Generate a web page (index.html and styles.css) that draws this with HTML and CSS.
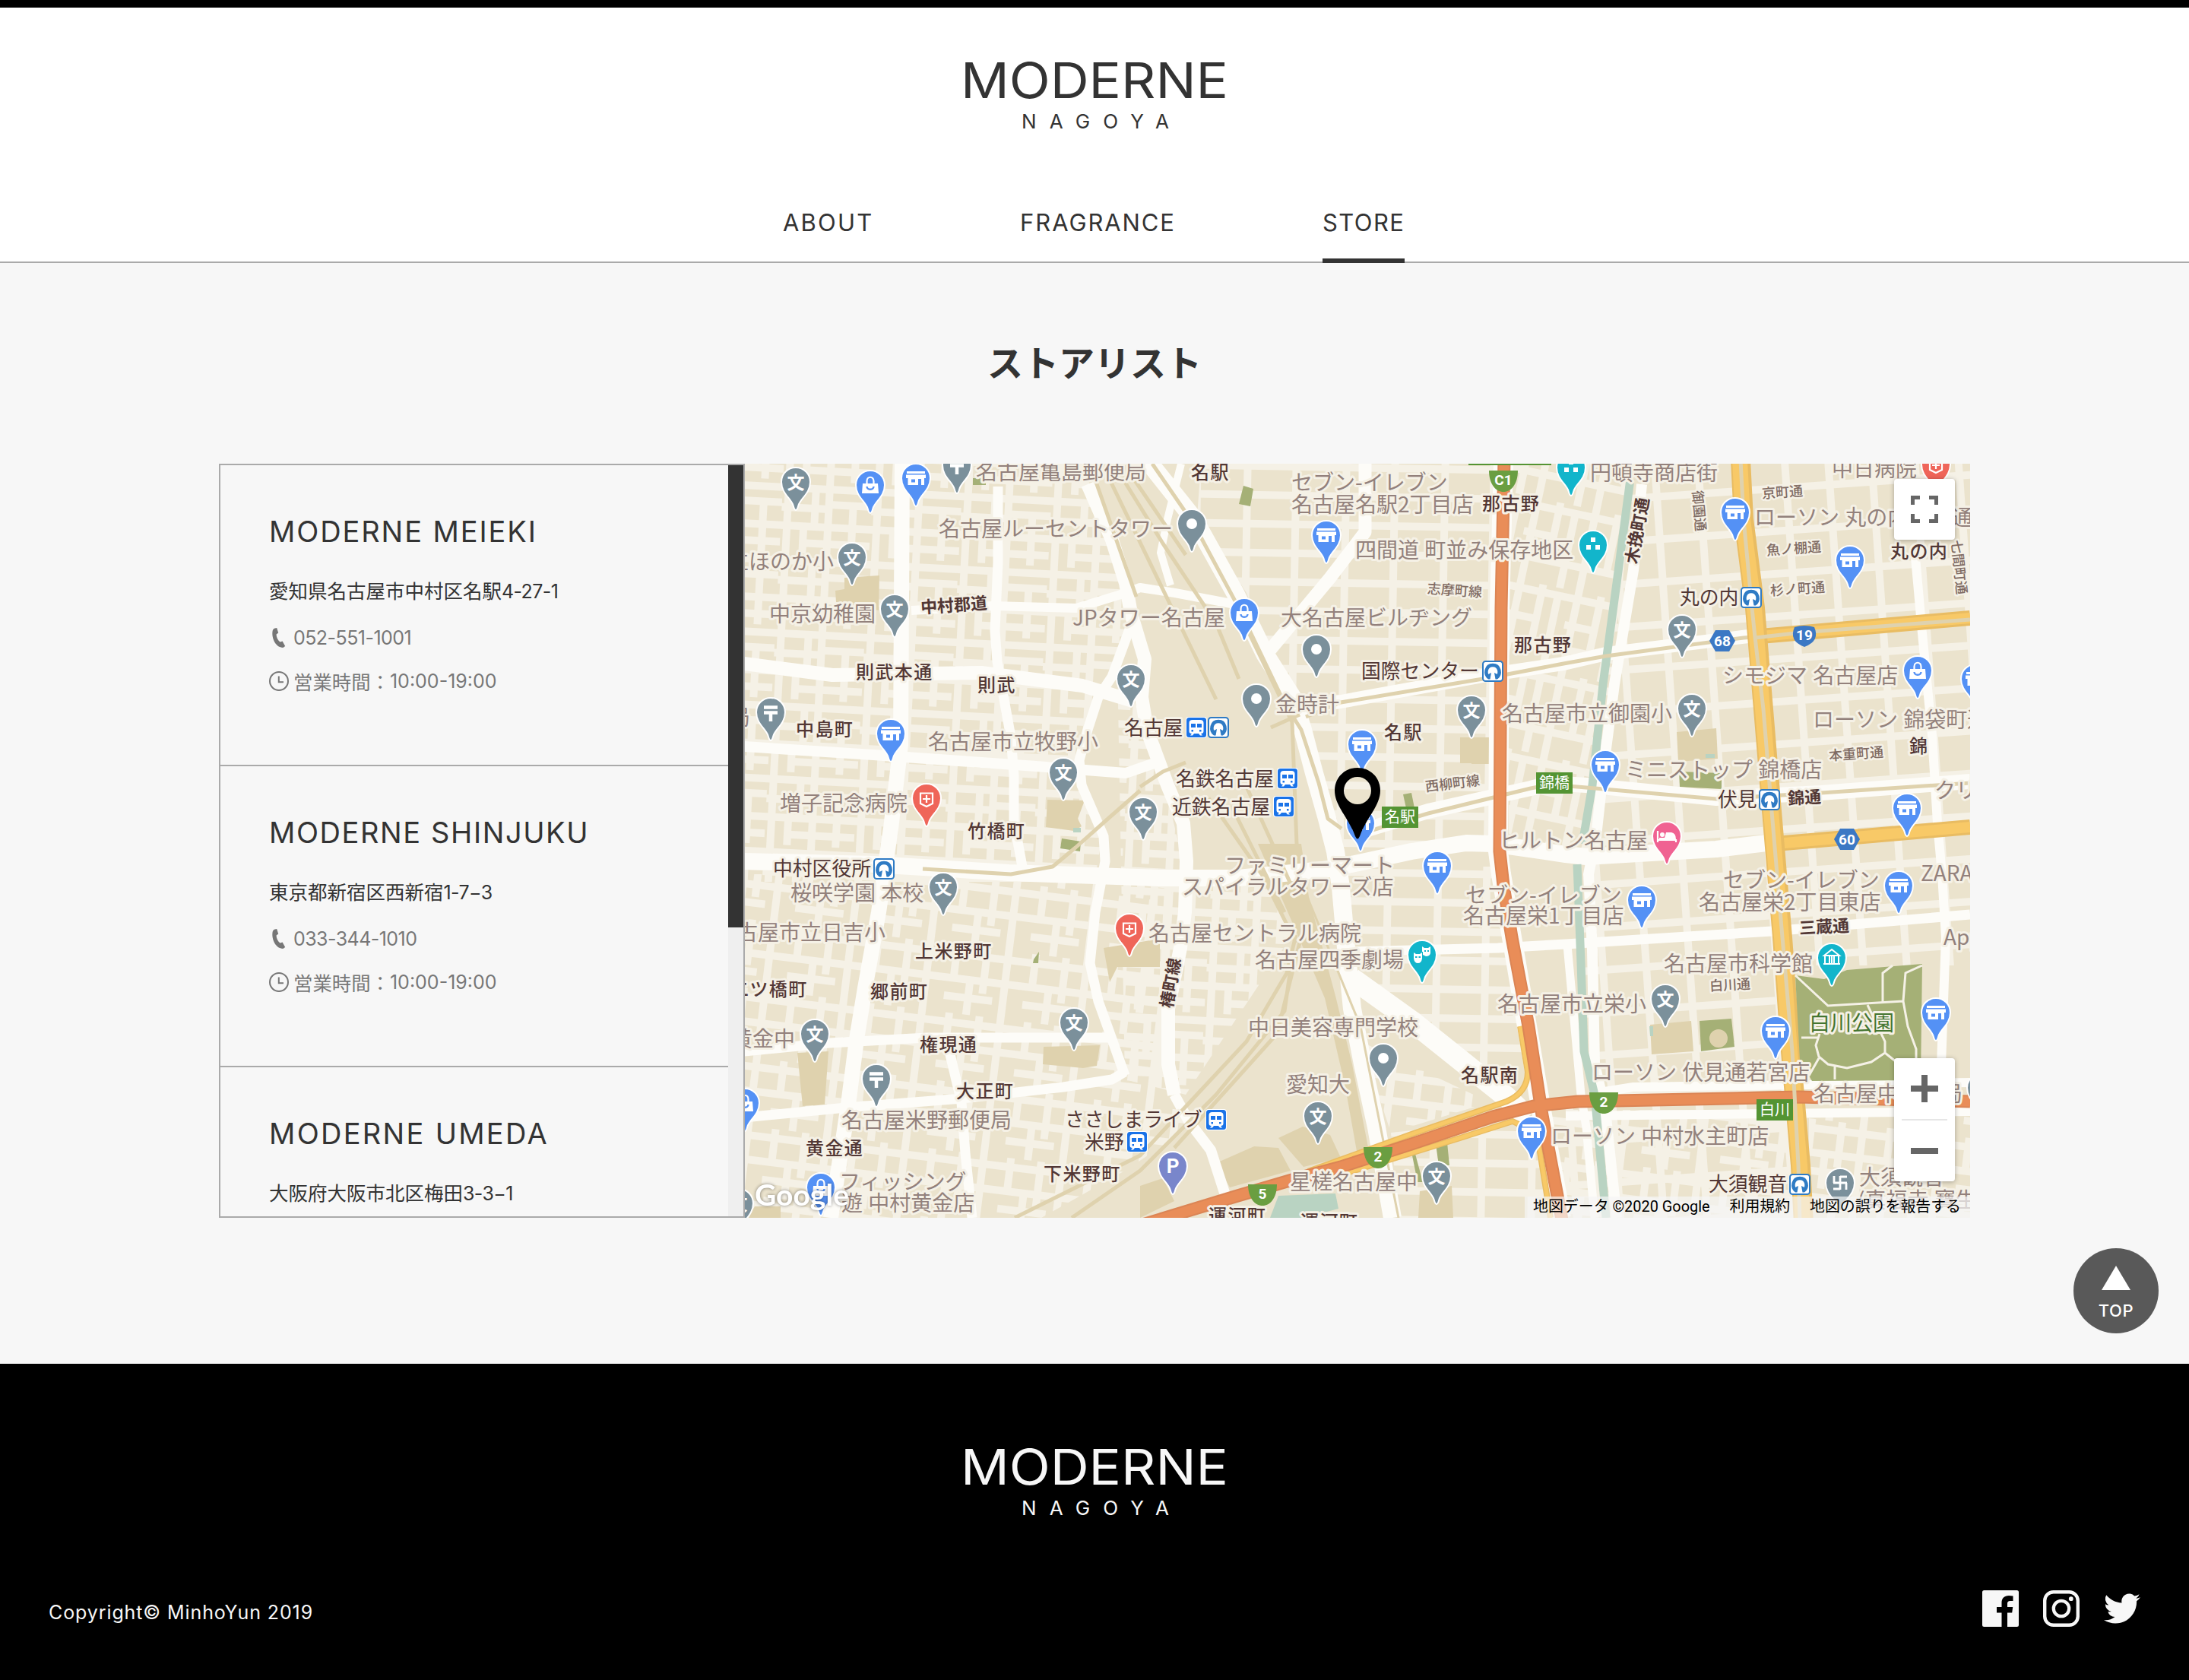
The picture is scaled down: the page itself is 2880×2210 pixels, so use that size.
FILE: index.html
```html
<!DOCTYPE html>
<html lang="ja">
<head>
<meta charset="utf-8">
<title>MODERNE NAGOYA</title>
<link rel="stylesheet" href="styles.css">
</head>
<body>
<header class="header">
  <svg class="logo" viewBox="0 0 352 92" role="img" aria-label="MODERNE NAGOYA">
    <text class="logo-name" x="0" y="49" textLength="352" lengthAdjust="spacingAndGlyphs">MODERNE</text>
    <text class="logo-city" x="80" y="89" textLength="194">NAGOYA</text>
  </svg>
  <nav class="nav">
    <a class="nav-link nav-about">ABOUT</a>
    <a class="nav-link nav-fragrance">FRAGRANCE</a>
    <a class="nav-link nav-store is-active">STORE</a>
  </nav>
</header>

<main class="main">
  <h1 class="title">ストアリスト</h1>
  <section class="stores">
    <div class="panel">
      <ul class="list">
        <li class="item">
          <h2 class="name name-meieki">MODERNE MEIEKI</h2>
          <p class="address">愛知県名古屋市中村区名駅<span class="num">4-27-1</span></p>
          <p class="info tel"><svg class="icon" viewBox="0 0 26 26"><use href="#i-tel"/></svg><span class="num">052-551-1001</span></p>
          <p class="info hours"><svg class="icon" viewBox="0 0 26 26"><use href="#i-clock"/></svg><span>営業時間：</span><span class="num">10:00-19:00</span></p>
        </li>
        <li class="item">
          <h2 class="name name-shinjuku">MODERNE SHINJUKU</h2>
          <p class="address">東京都新宿区西新宿<span class="num">1-7−3</span></p>
          <p class="info tel"><svg class="icon" viewBox="0 0 26 26"><use href="#i-tel"/></svg><span class="num">033-344-1010</span></p>
          <p class="info hours"><svg class="icon" viewBox="0 0 26 26"><use href="#i-clock"/></svg><span>営業時間：</span><span class="num">10:00-19:00</span></p>
        </li>
        <li class="item">
          <h2 class="name name-umeda">MODERNE UMEDA</h2>
          <p class="address">大阪府大阪市北区梅田<span class="num">3-3−1</span></p>
        </li>
      </ul>
      <div class="scrollbar"><div class="thumb"></div></div>
    </div>

    <div class="map">
      <svg class="canvas" viewBox="980 610 1612 992">
        <defs>
          <symbol id="i-tel" viewBox="0 0 26 26"><path fill="#777" d="M7.5 0.4 10.2 0 12.2 6.5 9.6 8.4C9.6 12 11.5 16 14.4 18.6L17.6 17.6 21.2 24 18.4 25.9C9 26 3 14 4.6 4 5 2 6 1 7.500.4z"/></symbol>
          <symbol id="i-clock" viewBox="0 0 26 26"><g fill="none" stroke="#777" stroke-width="2"><circle cx="13" cy="13" r="12"/><path d="M12.800 6.500V14.200H19"/></g></symbol>

          <pattern id="g1" width="118" height="96" patternUnits="userSpaceOnUse" patternTransform="rotate(3)">
            <path class="lane" d="M0 10H118M0 36H62M62 30H118M0 60H118M30 82H118M8 0V96M44 10V60M62 0V96M94 30V96M30 60V96"/>
          </pattern>
          <pattern id="g2" width="104" height="90" patternUnits="userSpaceOnUse" patternTransform="rotate(7)">
            <path class="lane" d="M0 12H104M0 44H104M40 68H104M14 0V90M50 0V44M72 44V90M90 0V60"/>
          </pattern>
          <pattern id="g3" width="57" height="56" patternUnits="userSpaceOnUse" patternTransform="rotate(-4)">
            <path class="lane" d="M0 20H57M20 0V56"/>
          </pattern>
          <pattern id="g4" width="78" height="110" patternUnits="userSpaceOnUse" patternTransform="rotate(12)">
            <path class="lane" d="M0 10H78M0 46H40M0 78H78M10 0V110M40 0V78M62 10V110"/>
          </pattern>
          <pattern id="g5" width="130" height="76" patternUnits="userSpaceOnUse" patternTransform="rotate(1)">
            <path class="lane" d="M0 14H130M0 52H130M26 0V76M92 0V76"/>
          </pattern>

          <path id="pin" d="M0 37C-2 37-2.500 34-3.400 31-6 22-19 15-19 0A19 19 0 1 1 19 0C19 15 6 22 3.400 31 2.500 34 2 37 0 37z" stroke="#fff" stroke-width="2"/>
          <g id="school"><use href="#pin" fill="#7b909b"/><text class="glyph" y="9">文</text></g>
          <g id="post"><use href="#pin" fill="#7b909b"/><path fill="none" stroke="#fff" stroke-width="4.500" d="M-9-6.500H9M-9 .5H9M0 0V12"/></g>
          <g id="dot"><use href="#pin" fill="#7b909b"/><circle r="7" fill="#fff"/></g>
          <g id="shop"><use href="#pin" fill="#5491f5"/><path fill="#fff" fill-rule="evenodd" d="M-12-9H12V-6H-12zM-13-4.500H13V0H11V9H7V1H3V9H-10.500V0H-13zM-6 1.500V5.500H-1V1.500z"/></g>
          <g id="bag"><use href="#pin" fill="#5491f5"/><path fill="#fff" d="M-10-2H10L11 11H-11z"/><path fill="none" stroke="#fff" stroke-width="2.200" d="M-4.500-1V-5C-4.500-12 4.500-12 4.500-5V-1"/><path fill="none" stroke="#5491f5" stroke-width="2.400" d="M-4.500 2C-4 7 4 7 4.500 2"/></g>
          <g id="hospital"><use href="#pin" fill="#ef6559"/><path fill="none" stroke="#fff" stroke-width="2.200" d="M-8-6.500H8V7L0 11-8 7zM0-4V6M-5 1H5"/></g>
          <g id="sight"><use href="#pin" fill="#12b5cb"/><path fill="#fff" d="M-3-10H3V-4H-3zM-9 0H-3V6H-9zM3 0H9V6H3z"/></g>
          <g id="train"><rect x="-14" y="-14" width="28" height="28" rx="4" fill="#fff"/><rect x="-13" y="-13" width="26" height="26" rx="3.500" fill="#1a73e8"/><path fill="#fff" fill-rule="evenodd" d="M-5-10H5Q9.500-10 9.500-6V5Q9.500 8 6 8L8 10.500H5L3 8H-3L-5 10.500H-8L-6 8Q-9.500 8-9.500 5V-6Q-9.500-10-5-10zM-7-5V0H-1V-5zM1-5V0H7V-5zM-6.500 3V5.500H-4V3zM4 3V5.500H6.500V3z"/></g>
          <g id="metro"><rect x="-13" y="-13" width="26" height="26" rx="3.500" fill="#fff" stroke="#2f7bc4" stroke-width="2"/><path fill="none" stroke="#2f7bc4" stroke-width="4.500" d="M-5 8.500C-11 4-9.500-8 0-8S11 4 5 8.500"/><path fill="#2f7bc4" d="M-8 5-2 2-3.500 10.500H-6zM8 5 2 2 3.500 10.500H6z"/></g>
          <path id="badge" d="M-19-14H19C19 4 10 14 0 14S-19 4-19-14z" fill="#6a9e41"/>
          <path id="hex" d="M-17 0-9-14H9L17 0 9 14H-9z" fill="#3b78c4"/>
        </defs>

        <rect x="979" y="610" width="1614" height="992" fill="#ebe3cd"/>

        <g>
          <path fill="url(#g1)" d="M979 610H1425L1480 780 1490 830 1430 960 1420 1000 1450 1100 1440 1160H979z"/>
          <path fill="url(#g2)" d="M979 1150H1545L1530 1420 1570 1480 1480 1540 1370 1602H979z"/>
          <path fill="url(#g5)" d="M1580 610H1975V1110L1760 1120 1700 930 1640 780 1575 680z"/>
          <path fill="url(#g4)" d="M1985 610H2150L2100 1120H1985z"/>
          <path fill="url(#g3)" d="M2150 610H2592V1270H2360V1602H2040V1460L2080 1450 2085 1100z"/>
          <path fill="url(#g2)" d="M2380 1465H2592V1602H2380zM2040 1460H2360V1602H2050z"/>
          <path fill="url(#g5)" d="M1765 1140H1985L2010 1400 1970 1430 1780 1280zM1830 1490 2020 1470 2050 1602H1840z"/>
          <path fill="url(#g1)" d="M1470 870 1525 1000 1560 1150 1660 1150 1700 1230 1560 1440 1480 1420z"/>
          <path fill="url(#g2)" d="M1790 1370 1960 1450 1830 1490z"/>
        </g>

        <g fill="#dfd2ae">
          <path d="M1099 777 1111 775V760L1157 757 1156 803 1100 792z"/>
          <path d="M1378 1052 1427 1053 1418 1077 1423 1087 1413 1093 1376 1088z"/>
          <path d="M1921 970H1960V1005H1936V1004H1921z"/>
          <path d="M2206 963 2258 958 2260 998 2208 1002z"/>
          <path d="M2171 1348 2225 1343 2228 1383 2173 1387z"/>
          <path d="M1452 1247 1526 1235V1272H1470L1460 1292z"/>
          <path d="M1049 1385 1090 1383 1085 1453 1056 1455z"/>
          <path d="M1373 1377 1447 1375 1443 1402 1425 1405 1372 1400z"/>
          <path d="M993 1587H1027V1602H985z"/>
          <path d="M1682 1497 1714 1482 1750 1493 1764 1523 1715 1535z"/>
          <path d="M1600 1530 1650 1508 1682 1510 1698 1540 1618 1562z"/>
          <path d="M1868 1567 1910 1560 1912 1602H1866z"/>
          <path d="M1500 1560 1530 1550 1545 1580 1500 1602z"/>
          <path d="M1655 1110H1712L1722 1180 1757 1310 1779 1400 1803 1525 1786 1520 1770 1430 1743 1313 1700 1213z"/>
        </g>
        <g fill="#a5b076">
          <path d="M1397 1103 1422 1107 1421 1120 1395 1116z"/>
          <path d="M1636 639 1649 643 1645 666 1630 663z"/>
          <path d="M1846 1045 1857 1043 1861 1063H1850z"/>
          <path d="M2209 1015 2265 1017V1038L2210 1035z"/>
          <path d="M2236 1343 2278 1340 2282 1377 2238 1383z"/>
          <path d="M1889 1505 1904 1503 1907 1533H1893zM1858 1520 1862 1518 1872 1555H1865z"/>
          <path d="M1280 629H1297V638H1280zM1360 1262 1367 1252 1366 1267H1359z"/>
        </g>
        <circle cx="2261" cy="1366" r="12" fill="#dfd2ae"/>
        <g fill="#b9d3c2">
          <path d="M1682 1573 1757 1570 1761 1590 1715 1602H1671z"/>
          <path d="M2170 1350 2175 1350 2175 1363H2171zM2244 992H2256V997H2244zM1412 1089H1422V1095H1412z"/>
        </g>

        <g class="main-road">
          <path stroke-width="20" d="M1187 610 1186 790 1185 980 1172 1090 1156 1200 1138 1300 1127 1367 1116 1453 1109 1500 1093 1602"/>
          <path stroke-width="13" d="M1313 640V740L1309 830 1312 870 1330 970 1334 1020V1080L1345 1140"/>
          <path stroke-width="18" d="M979 873 1095 888 1291 885 1424 902 1490 922"/>
          <path stroke-width="14" d="M979 982 1149 993 1363 1008 1481 1017 1530 1000"/>
          <path stroke-width="12" d="M1199 803 1306 797 1416 800 1481 780 1500 773 1546 780 1625 795"/>
          <path stroke-width="18" d="M1431 637 1463 710 1481 767 1488 807 1506 867 1502 917 1509 960 1536 1033 1557 1083 1561 1133 1559 1200 1553 1247 1537 1327V1400L1545 1440"/>
          <path stroke-width="14" d="M1545 1440 1564 1475 1593 1513 1613 1575"/>
          <path stroke-width="13" d="M1490 817 1463 890 1445 917 1431 960 1420 1000 1423 1033 1452 1100 1454 1133 1441 1200 1434 1267 1445 1317 1463 1367 1480 1415"/>
          <path stroke-width="13" d="M979 1383 1091 1372 1220 1365H1462M979 1470 1113 1457 1266 1445 1399 1430 1463 1420 1480 1410M1249 1383 1265 1450 1270 1517 1279 1602"/>
          <path stroke-width="22" d="M979 1133 1149 1137 1327 1148 1527 1155 1629 1155 1750 1143 1857 1120 1929 1109 1964 1110 2060 1124 2087 1127 2258 1117 2324 1109"/>
          <path stroke-width="24" d="M1505 600 1571 683 1625 780 1664 860 1700 917 1714 960 1729 1017 1746 1077 1757 1120 1764 1167 1771 1247 1779 1327 1793 1400 1811 1483 1832 1602"/>
          <path stroke-width="10" d="M1554 610 1536 683 1527 727 1540 770"/>
          <path stroke-width="17" d="M1796 610V700L1750 760 1671 855"/>
          <path stroke-width="18" d="M1707 933 1764 923 1957 888 2057 873 2113 860 2300 837"/>
          <path stroke-width="20" d="M1779 1097 1879 1067 2014 1037 2040 1030 2087 1033 2258 1050 2396 1043 2592 1028"/>
          <path stroke-width="28" d="M1779 1287 1857 1343 1982 1443 2010 1470"/>
          <path stroke-width="13" d="M1779 1252 1971 1247 2060 1242 2331 1225 2592 1203"/>
          <path stroke-width="14" d="M2160 637 2149 750 2124 900 2111 1000 2100 1100 2090 1150 2095 1250 2098 1400 2112 1460 2127 1602"/>
          <path stroke-width="11" d="M2062 1243 2080 1440 2087 1483 2098 1602"/>
          <path stroke-width="12" d="M2520 733 2529 833 2542 967 2549 1083 2555 1150 2560 1233 2553 1430"/>
          <path stroke-width="12" d="M2098 1438 2149 1430 2592 1424M2060 1468 2592 1462"/>
          <path stroke-width="26" d="M1978 610 1973 800 1971 1120 1975 1150 1989 1233 2009 1350 2029 1467 2054 1602"/>
        </g>

        <path class="water" d="M2145 630 2127 767 2109 900 2095 1033 2082 1110M2075 1137 2080 1267 2084 1383 2098 1440 2113 1602"/>

        <g class="rail">
          <path d="M1516 610 1571 690 1630 800 1690 925 1712 960 1735 1030 1747 1077 1765 1090"/>
          <path d="M1430 600 1495 785M1445 600 1600 920M1465 610 1530 715 1600 820 1630 893M1478 610 1560 730M1672 957 1710 940"/>
          <path d="M1625 795 1700 950 1706 1110M1590 1050 1660 1150 1705 1240M1620 1060 1690 1200M1640 1035 1715 1200"/>
          <path d="M1560 1003 1530 1015 1500 1035M1500 1040 1460 1075 1415 1115 1385 1140 1330 1150 1214 1143"/>
          <path d="M1705 1230 1693 1280 1640 1370 1500 1520 1335 1602M1710 1240 1680 1360 1545 1510M1700 1260 1690 1330 1600 1440 1500 1540 1410 1602"/>
          <path d="M1720 1180 1790 1350 1840 1602" stroke-width="3"/>
          <path d="M1718 943 1764 924 1957 892 2057 873 2113 863 2294 839 2592 815"/>
          <path d="M1779 1100 1879 1070 2014 1037 2040 1032 2087 1036 2258 1051 2396 1043 2592 1030"/>
        </g>

        <g class="road-line">
          <path stroke="#e9bc62" stroke-width="20" d="M2316 837 2592 813M2336 1110 2592 1088"/>
          <path stroke="#f8c967" stroke-width="14" d="M2316 837 2592 813M2336 1110 2592 1088"/>
          <path stroke="#e9bc62" stroke-width="26" d="M2290 605 2294 683 2309 800 2320 933 2331 1067 2345 1233 2356 1383 2369 1533 2373 1610"/>
          <path stroke="#f8c967" stroke-width="20" d="M2289 605 2293 683 2308 800 2319 933 2330 1067 2344 1233 2355 1383 2368 1533 2372 1610"/>
          <path stroke="#e9bc62" stroke-width="8" d="M1721 1541 1857 1492 1982 1449Q2010 1437 2010 1410L2000 1350M1765 1545 1921 1497 1990 1475 2022 1490 2040 1602"/>
          <path stroke="#f8c967" stroke-width="5" d="M1721 1541 1857 1492 1982 1449Q2010 1437 2010 1410L2000 1350M1765 1545 1921 1497 1990 1475 2022 1490 2040 1602"/>
          <path stroke="#db8555" stroke-width="17" d="M1979 605 1975 800 1973 1120 1978 1165 1989 1233 2011 1350 2029 1467 2056 1610M1500 1612 1625 1574 1700 1552 1764 1535 1857 1505 1964 1469 2018 1455 2076 1449 2367 1443 2592 1449"/>
          <path stroke="#e98d58" stroke-width="13" d="M1979 605 1975 800 1973 1120 1978 1165 1989 1233 2011 1350 2029 1467 2056 1610M1500 1612 1625 1574 1700 1552 1764 1535 1857 1505 1964 1469 2018 1455 2076 1449 2367 1443 2592 1449"/>
          <path stroke="#dfd2ae" stroke-width="5" d="M2290 605 2294 683 2305 800 2309 838 2320 933 2331 1067 2345 1233 2358 1383 2366 1533 2368 1610M2309 839 2370 832 2592 815"/>
        </g>

        <path fill="#a5b076" d="M2362 1283 2400 1288 2430 1276 2529 1268 2527 1421 2384 1422 2368 1395z"/>
        <path fill="none" stroke="#f5f1e6" stroke-width="3" d="M2362 1283 2405 1323 2504 1317M2477 1320V1280L2490 1270M2504 1317 2507 1280 2529 1270M2504 1317 2510 1350 2521 1380V1420M2457 1322 2480 1370 2480 1385 2462 1397 2430 1405 2405 1400 2393 1390 2389 1375 2394 1360M2370 1365H2392M2393 1392 2380 1415M2480 1385 2505 1405M2414 1402V1420"/>

        <rect x="1932" y="610" width="109" height="2" fill="#549433"/>

        <g class="plate">
          <rect x="1818" y="1061" width="48" height="28"/><rect x="2021" y="1016" width="48" height="28"/><rect x="2311" y="1446" width="48" height="28"/>
          <text x="1842" y="1082">名駅</text><text x="2045" y="1037">錦橋</text><text x="2335" y="1467">白川</text>
        </g>
        <g class="shield">
          <use href="#badge" x="1978" y="633"/><text x="1978" y="638">C1</text>
          <use href="#badge" x="1813" y="1523"/><text x="1813" y="1528">2</text>
          <use href="#badge" x="1661" y="1572"/><text x="1661" y="1577">5</text>
          <use href="#badge" x="2110" y="1451"/><text x="2110" y="1456">2</text>
          <path d="M2361 825Q2374 821 2387 825 2395 843 2374 851 2353 843 2361 825z" fill="#3b78c4"/><text x="2374" y="842">19</text>
          <use href="#hex" x="2266" y="843"/><text x="2266" y="850">68</text>
          <use href="#hex" x="2430" y="1104"/><text x="2430" y="1111">60</text>
        </g>

        <g class="poi" transform="translate(0 9)">
          <text x="1284" y="622">名古屋亀島郵便局</text><text x="1235" y="697">名古屋ルーセントタワー</text><text x="957" y="740">立ほのか小</text>
          <text x="1012" y="809">中京幼稚園</text><text x="1411" y="814">JPタワー名古屋</text><text x="1221" y="977">名古屋市立牧野小</text>
          <text x="1026" y="1058">増子記念病院</text><text x="959" y="945">局</text><text x="1699" y="636">セブン-イレブン</text>
          <text x="1699" y="665">名古屋名駅2丁目店</text><text x="1783" y="725">四間道 町並み保存地区</text><text x="1685" y="814">大名古屋ビルヂング</text>
          <text x="1678" y="928">金時計</text><text x="1976" y="940">名古屋市立御園小</text><text x="1972" y="1107">ヒルトン名古屋</text>
          <text x="2092" y="623">円頓寺商店街</text><text x="2410" y="618">中日病院</text><text x="2308" y="682">ローソン 丸の内本町通</text>
          <text x="2266" y="890">シモジマ 名古屋店</text><text x="2385" y="948">ローソン 錦袋町通</text><text x="2138" y="1014">ミニストップ 錦橋店</text>
          <text x="2545" y="1041">クリ</text><text x="1040" y="1176">桜咲学園 本校</text><text x="941" y="1228">名古屋市立日吉小</text>
          <text x="962" y="1368">黄金中</text><text x="1107" y="1475">名古屋米野郵便局</text><text x="1104" y="1556">フィッシング</text>
          <text x="1107" y="1584">遊 中村黄金店</text><text x="1611" y="1140">ファミリーマート</text><text x="1555" y="1168">スパイラルタワーズ店</text>
          <text x="1511" y="1229">名古屋セントラル病院</text><text x="1651" y="1264">名古屋四季劇場</text><text x="1642" y="1353">中日美容専門学校</text>
          <text x="1692" y="1428">愛知大</text><text x="1928" y="1179">セブン-イレブン</text><text x="1925" y="1206">名古屋栄1丁目店</text>
          <text x="1970" y="1322">名古屋市立栄小</text><text x="1697" y="1556">星槎名古屋中</text><text x="2267" y="1159">セブン-イレブン</text>
          <text x="2235" y="1188">名古屋栄2丁目東店</text><text x="2527" y="1150">ZARA</text><text x="2189" y="1269">名古屋市科学館</text>
          <text x="2557" y="1234">Apple</text><text x="2094" y="1412">ローソン 伏見通若宮店</text><text x="2386" y="1440">名古屋中郵便局</text>
          <text x="2040" y="1496">ローソン 中村水主町店</text><text x="2446" y="1550">大須観音</text><text x="2444" y="1580">(真福寺 寶生院)</text>
          <text class="park" x="2380" y="1347">白川公園</text>
        </g>

        <g class="area" transform="translate(0 9)">
          <text x="1126" y="884">則武本通</text><text x="1286" y="901">則武</text><text x="1047" y="959">中島町</text><text x="1273" y="1093">竹橋町</text>
          <text x="1567" y="621">名駅</text><text x="1950" y="662">那古野</text><text x="1992" y="848">那古野</text><text x="1821" y="963">名駅</text>
          <text x="2487" y="725">丸の内</text><text x="2512" y="981">錦</text><text x="1204" y="1251">上米野町</text><text x="961" y="1301">二ツ橋町</text>
          <text x="1145" y="1304">郷前町</text><text x="1210" y="1374">権現通</text><text x="1258" y="1435">大正町</text><text x="1060" y="1510">黄金通</text>
          <text x="1373" y="1544">下米野町</text><text x="1922" y="1414">名駅南</text><text x="1590" y="1599">運河町</text><text x="1711" y="1607">運河町</text>
        </g>

        <g class="station" transform="translate(0 9.500)">
          <text x="1479" y="957">名古屋</text><text x="1547" y="1024">名鉄名古屋</text><text x="1542" y="1061">近鉄名古屋</text><text x="1791" y="882">国際センター</text>
          <text x="2210" y="785">丸の内</text><text x="2260" y="1051">伏見</text><text x="1017" y="1142">中村区役所</text><text x="1401" y="1472">ささしまライブ</text>
          <text x="1427" y="1502">米野</text><text x="2248" y="1557">大須観音</text>
        </g>

        <g class="street" text-anchor="middle">
          <text transform="translate(1255 796) rotate(-4)" y="8">中村郡道</text><text transform="translate(2154 698) rotate(-80)" y="8">木挽町通</text>
          <text transform="translate(2374 1049) rotate(-3)" y="8">錦通</text><text transform="translate(2400 1219) rotate(-3)" y="8">三蔵通</text>
          <text transform="translate(1540 1293) rotate(-80)" y="8">椿町線</text>
        </g>
        <g class="lane-name" text-anchor="middle">
          <text transform="translate(1914 776) rotate(4)" y="7">志摩町線</text><text transform="translate(1911 1030) rotate(-7)" y="7">西柳町線</text>
          <text transform="translate(2345 647) rotate(-4)" y="7">京町通</text><text transform="translate(2236 672) rotate(85)" y="7">御園通</text>
          <text transform="translate(2360 721) rotate(-4)" y="7">魚ノ棚通</text><text transform="translate(2365 774) rotate(-4)" y="7">杉ノ町通</text>
          <text transform="translate(2578 746) rotate(84)" y="7">七間町通</text><text transform="translate(2442 991) rotate(-4)" y="7">本重町通</text>
          <text transform="translate(2276 1295) rotate(-3)" y="7">白川通</text>
        </g>

        <g>
          <use href="#train" x="1574" y="957"/><use href="#metro" x="1603" y="957"/><use href="#train" x="1694" y="1024"/><use href="#train" x="1689" y="1061"/>
          <use href="#metro" x="1964" y="883"/><use href="#metro" x="2304" y="786"/><use href="#metro" x="2328" y="1052"/><use href="#metro" x="1163" y="1143"/>
          <use href="#train" x="1600" y="1473"/><use href="#train" x="1496" y="1502"/><use href="#metro" x="2368" y="1558"/>
        </g>

        <g>
          <use href="#school" x="1047" y="634"/><use href="#school" x="1121" y="733"/><use href="#school" x="1177" y="801"/><use href="#school" x="1488" y="893"/>
          <use href="#school" x="1399" y="1016"/><use href="#school" x="1504" y="1068"/><use href="#school" x="1936" y="934"/><use href="#school" x="2213" y="828"/>
          <use href="#school" x="2226" y="932"/><use href="#school" x="1241" y="1167"/><use href="#school" x="1072" y="1360"/><use href="#school" x="1413" y="1345"/>
          <use href="#school" x="1734" y="1468"/><use href="#school" x="1890" y="1547"/><use href="#school" x="2191" y="1314"/><use href="#school" x="972" y="1583"/>
          <use href="#post" x="1259" y="612"/><use href="#post" x="1014" y="937"/><use href="#post" x="1153" y="1419"/>
          <use href="#dot" x="1568" y="689"/><use href="#dot" x="1732" y="854"/><use href="#dot" x="1653" y="919"/><use href="#dot" x="1820" y="1392"/><use href="#dot" x="2607" y="1431"/>
          <use href="#shop" x="1205" y="629"/><use href="#shop" x="1172" y="965"/><use href="#shop" x="1745" y="704"/><use href="#shop" x="1790" y="1083"/>
          <use href="#shop" x="1792" y="979"/><use href="#shop" x="2283" y="674"/><use href="#shop" x="2434" y="737"/><use href="#shop" x="2599" y="893"/>
          <use href="#shop" x="2112" y="1006"/><use href="#shop" x="2509" y="1063"/><use href="#shop" x="1891" y="1139"/><use href="#shop" x="2015" y="1488"/>
          <use href="#shop" x="2160" y="1184"/><use href="#shop" x="2498" y="1165"/><use href="#shop" x="2547" y="1332"/><use href="#shop" x="2336" y="1356"/>
          <use href="#bag" x="1145" y="638"/><use href="#bag" x="1637" y="806"/><use href="#bag" x="2523" y="882"/><use href="#bag" x="980" y="1451"/><use href="#bag" x="1080" y="1562"/>
          <use href="#hospital" x="1219" y="1050"/><use href="#hospital" x="1486" y="1221"/><use href="#hospital" x="2547" y="611"/>
          <use href="#sight" x="2067" y="615"/><use href="#sight" x="2096" y="717"/>
          <g transform="translate(1871 1256)"><use href="#pin" fill="#12b5cb"/><path fill="#fff" d="M0-11 3-9H8L11-11V-2Q10 2 5 2L1 0V-4H0zM-11-3-8-1H-3L0-3V5Q-1 11-5.500 11T-11 5z"/><path stroke="#12b5cb" stroke-width="2" d="M-9 3H-6.500M-4.500 3H-2M3-5H5M7-5H9"/></g>
          <g transform="translate(2410 1260)"><use href="#pin" fill="#12b5cb"/><path fill="none" stroke="#fff" stroke-width="2" d="M-10-3 0-11 10-3zM-11 8H11M-9-3V8M9-3V8M-3-2V7M0-2V7M3-2V7"/></g>
          <g transform="translate(2193 1100)"><use href="#pin" fill="#f06292"/><path fill="none" stroke="#fff" stroke-width="2.200" d="M-12-7V8M-12 5H12V8"/><circle cx="-6" cy="-2" r="3" fill="#fff"/><path fill="#fff" d="M-10 2H-3L-1-5H6Q12-4 12 4H-10z"/></g>
          <g transform="translate(1543 1534)"><use href="#pin" fill="#7986cb"/><text class="glyph parking" y="9">P</text></g>
          <g transform="translate(2421 1556)"><use href="#pin" fill="#7b909b"/><path fill="none" stroke="#fff" stroke-width="2.800" d="M0-9V9M-9 0H9M0-8H9M-8 0V-9M0 8H-9M8 0V9"/></g>
        </g>

        <path d="M1786 1010C1769 1010 1756 1023 1756 1040 1756 1060 1774 1075 1783 1100Q1786 1107 1789 1100C1798 1075 1816 1060 1816 1040 1816 1023 1803 1010 1786 1010zM1786 1022A18 18 0 1 1 1786 1058 18 18 0 1 1 1786 1022z"/>
        <text class="google" x="993" y="1586" textLength="124">Google</text>
      </svg>
      <div class="control fullscreen"><svg viewBox="0 0 36 36"><path d="M2.500 12V2.500H12M24 2.500H33.500V12M33.500 24V33.500H24M12 33.500H2.500V24"/></svg></div>
      <div class="control zoom">
        <svg class="zoom-in" viewBox="0 0 36 36"><path d="M0 18H36M18 0V36"/></svg>
        <svg class="zoom-out" viewBox="0 0 36 36"><path d="M0 18H36"/></svg>
      </div>
      <div class="terms"><span>地図データ ©2020 Google</span><span>利用規約</span><span>地図の誤りを報告する</span></div>
    </div>
  </section>
  <a class="top"><svg class="top-arrow" viewBox="0 0 38 32"><path d="M19 0 38 32H0z" fill="#fff"/></svg><span>TOP</span></a>
</main>

<footer class="footer">
  <svg class="logo" viewBox="0 0 352 92" role="img" aria-label="MODERNE NAGOYA">
    <text class="logo-name" x="0" y="49" textLength="352" lengthAdjust="spacingAndGlyphs">MODERNE</text>
    <text class="logo-city" x="80" y="89" textLength="194">NAGOYA</text>
  </svg>
  <div class="footer-row">
    <p class="copyright">Copyright© MinhoYun 2019</p>
    <div class="social">
      <svg viewBox="0 0 48 48"><path fill="#f7f7f7" d="M2.500 0H45.500Q48 0 48 2.500V45.500Q48 48 45.500 48H33V29.500H39.200L40.200 22H33V17.500C33 15.300 34 14 36.700 14H40.500V7.400L35 7C29 7 25.500 10.500 25.500 16.500V22H19V29.500H25.500V48H2.500Q0 48 0 45.500V2.500Q0 0 2.500 0z"/></svg>
      <svg viewBox="0 0 48 48"><rect x="2.200" y="2.200" width="43.600" height="43.600" rx="11.500" fill="none" stroke="#f7f7f7" stroke-width="4.400"/><circle cx="24" cy="24" r="10.200" fill="none" stroke="#f7f7f7" stroke-width="4.300"/><circle cx="36.800" cy="11.200" r="2.900" fill="#f7f7f7"/></svg>
      <svg viewBox="0 0 24 24"><path fill="#f7f7f7" d="M23.950 4.570a10 10 0 0 1-2.820.77 4.960 4.960 0 0 0 2.160-2.720c-.95.550-2 .95-3.130 1.180a4.920 4.920 0 0 0-8.380 4.480C7.690 8.090 4.070 6.130 1.640 3.160a4.920 4.920 0 0 0 1.520 6.570 4.900 4.900 0 0 1-2.230-.61v.06a4.920 4.920 0 0 0 3.950 4.830 5 5 0 0 1-2.210.08 4.940 4.940 0 0 0 4.600 3.420A9.870 9.870 0 0 1 0 19.540a13.990 13.990 0 0 0 7.550 2.210c9.050 0 14-7.500 14-13.990 0-.21 0-.42-.02-.63a9.940 9.940 0 0 0 2.460-2.550z"/></svg>
    </div>
  </div>
</footer>
</body>
</html>
```
FILE: styles.css
```css
* { box-sizing: border-box; }
body {
  margin: 0;
  background: #f7f7f7;
  color: #333;
  font-family: Inter, "Noto Sans CJK JP", sans-serif;
}
h1, h2, p, ul { margin: 0; padding: 0; }

/* header */
.header {
  display: flex;
  flex-direction: column;
  align-items: center;
  justify-content: space-between;
  height: 346px;
  padding-top: 70px;
  border-top: 10px solid #000;
  border-bottom: 2px solid #aaa;
  background: #fff;
}
.logo { width: 352px; height: 92px; fill: #333; overflow: visible; }
.logo-name { font: 400 65px Inter, sans-serif; }
.logo-city { font: 400 26px Inter, sans-serif; }
.nav { display: flex; gap: 192px; margin: 0 2px -2px 0; }
.nav-link {
  height: 76px;
  font-size: 31px;
  line-height: 46px;
  text-align: center;
  white-space: nowrap;
}
.nav-link.is-active { border-bottom: 6px solid #333; }
.nav-about { width: 119px; letter-spacing: 2.2px; }
.nav-fragrance { width: 207px; letter-spacing: 1.9px; }
.nav-store { width: 108px; letter-spacing: 1.4px; }

/* store list */
.main {
  display: flex;
  flex-direction: column;
  align-items: center;
  height: 1448px;
  padding-top: 93px;
}
.title {
  margin-bottom: 99px;
  font: 700 47px/72px "Noto Sans CJK JP", sans-serif;
}
.stores { display: flex; width: 80%; height: 992px; }
.panel {
  display: flex;
  flex: none;
  width: 692px;
  border: 2px solid #aaa;
  overflow: hidden;
}
.list { flex: 1; list-style: none; overflow: hidden; }
.item {
  height: 396px;
  padding: 64px 0 0 64px;
  border-bottom: 2px solid #aaa;
}
.name { font-size: 38px; font-weight: 400; line-height: 46px; }
.name-meieki { letter-spacing: 1.9px; }
.name-shinjuku { letter-spacing: 1.6px; }
.name-umeda { letter-spacing: 2.3px; }
.address {
  margin-top: 36px;
  font-family: "Noto Sans CJK JP", sans-serif;
  font-size: 25.5px;
  line-height: 36px;
}
.num { font-family: Inter, sans-serif; font-size: 25px; }
.address .num { letter-spacing: -.6px; }
.info {
  display: flex;
  align-items: center;
  height: 36px;
  color: #777;
  font-family: "Noto Sans CJK JP", sans-serif;
  font-size: 25.4px;
  line-height: 36px;
}
.tel { margin-top: 25px; }
.tel .num { letter-spacing: -.55px; }
.hours { margin-top: 21px; }
.icon { width: 26px; height: 26px; margin-right: 6px; }
.scrollbar { width: 20px; background: #efefef; }
.thumb { height: 608px; background: #333; }

/* map */
.map { position: relative; flex: 1; overflow: hidden; }
.canvas { display: block; width: 100%; height: 100%; font-family: "Noto Sans CJK JP", sans-serif; }
.lane { fill: none; stroke: #f5f1e6; stroke-width: 10; }
.main-road { fill: none; stroke: #fdfcf8; stroke-linejoin: round; }
.water { fill: none; stroke: #b9d3c2; stroke-width: 11; stroke-linejoin: round; }
.rail { fill: none; stroke: #dfd2ae; stroke-width: 5; stroke-linejoin: round; }
.road-line { fill: none; stroke-linejoin: round; }
.poi, .area, .station, .street, .lane-name { paint-order: stroke; stroke-linejoin: round; white-space: pre; }
.poi { font-size: 28px; font-weight: 400; word-spacing: 1px; fill: #93817c; stroke: #f5f1e6; stroke-width: 6px; }
.poi .park { fill: #447530; }
.area { font-size: 24px; font-weight: 500; letter-spacing: 1.4px; fill: #523735; stroke: #f5f1e6; stroke-width: 6px; }
.station { font-size: 25.8px; fill: #523735; stroke: #f5f1e6; stroke-width: 6px; }
.street { font-size: 22px; font-weight: 700; fill: #523735; stroke: #f5f1e6; stroke-width: 5px; }
.lane-name { font-size: 18px; font-weight: 500; fill: #806b63; stroke: #f5f1e6; stroke-width: 5px; }
.plate { font-size: 20px; text-anchor: middle; }
.plate rect { fill: #549433; }
.plate text { fill: #fff; }
.shield text { font: 700 19px Roboto, sans-serif; fill: #fff; text-anchor: middle; }
.glyph { font-size: 23px; font-weight: 700; fill: #fff; text-anchor: middle; }
.parking { font-family: Roboto, sans-serif; font-size: 26px; }
.google {
  font: 700 39px "Lato", sans-serif;
  fill: #fff;
  filter: drop-shadow(0 0 2px rgba(0, 0, 0, .45));
}
.control {
  position: absolute;
  right: 20px;
  display: flex;
  flex-direction: column;
  align-items: center;
  width: 80px;
  border-radius: 4px;
  background: #fff;
  box-shadow: 0 1px 6px rgba(0, 0, 0, .3);
}
.control svg { width: 36px; height: 36px; fill: none; stroke: #666; stroke-width: 8; }
.fullscreen { top: 20px; height: 80px; justify-content: center; }
.fullscreen svg { stroke-width: 5; }
.zoom { top: 782px; height: 162px; }
.zoom-in { margin: 22px 0; }
.zoom-out { box-sizing: content-box; padding: 22px 12px; border-top: 2px solid #e6e6e6; }
.terms {
  position: absolute;
  right: 0;
  bottom: 0;
  display: flex;
  gap: 26px;
  height: 28px;
  padding: 0 12px 0 11px;
  background: rgba(245, 245, 245, .7);
  color: #000;
  font: 19.900px/27px Roboto, "Noto Sans CJK JP", sans-serif;
  white-space: nowrap;
}

/* back to top */
.top {
  position: absolute;
  left: 2728px;
  top: 1642px;
  display: flex;
  flex-direction: column;
  align-items: center;
  width: 112px;
  height: 112px;
  padding-top: 23px;
  border-radius: 50%;
  background: #595959;
  color: #fff;
  font-size: 22px;
  font-weight: 500;
  line-height: 28px;
  letter-spacing: .6px;
}
.top-arrow { width: 38px; height: 32px; margin-bottom: 13px; }

/* footer */
.footer {
  display: flex;
  flex-direction: column;
  align-items: center;
  height: 416px;
  padding-top: 110px;
  background: #000;
}
.footer .logo { fill: #f7f7f7; }
.footer-row {
  display: flex;
  justify-content: space-between;
  width: 100%;
  margin-top: 96px;
  padding: 0 64px;
  color: #f7f7f7;
}
.copyright { font-size: 25px; line-height: 58px; letter-spacing: .9px; }
.social { display: flex; gap: 32px; }
.social svg { width: 48px; height: 48px; }
```
